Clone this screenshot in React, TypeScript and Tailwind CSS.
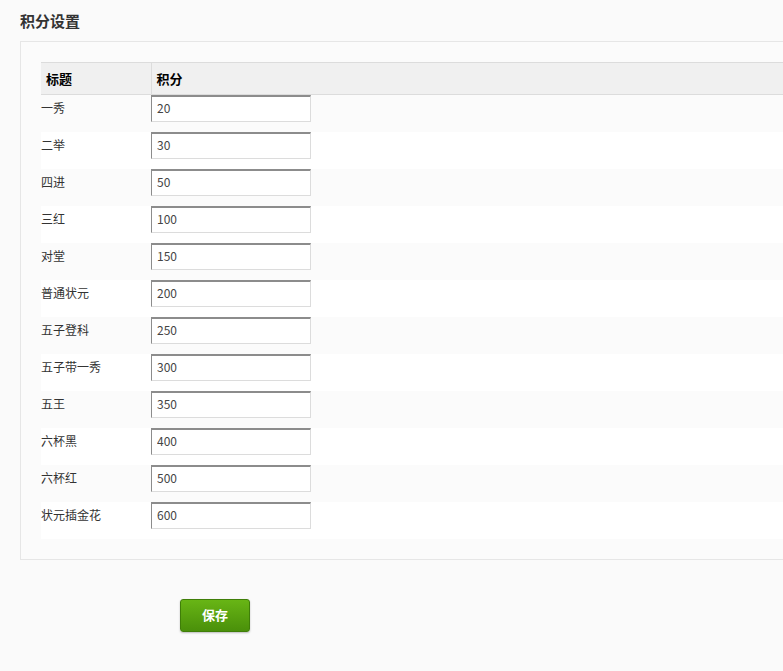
const rows: [string, string][] = [
  ["一秀", "20"],
  ["二举", "30"],
  ["四进", "50"],
  ["三红", "100"],
  ["对堂", "150"],
  ["普通状元", "200"],
  ["五子登科", "250"],
  ["五子带一秀", "300"],
  ["五王", "350"],
  ["六杯黑", "400"],
  ["六杯红", "500"],
  ["状元插金花", "600"],
];

const font = {
  fontFamily: '"Microsoft YaHei", "Noto Sans CJK SC", "Liberation Sans", sans-serif',
};

export default function App() {
  return (
    <div
      className="min-h-[671px] w-[783px] overflow-hidden bg-[#fafafa] text-[#333]"
      style={font}
    >
      {/* page title */}
      <div className="pl-5 pt-[11px] h-[41px]">
        <h1 className="text-[15px] font-bold leading-[20px] text-[#333]">积分设置</h1>
      </div>

      {/* settings panel */}
      <div className="ml-5 border border-r-0 border-[#e6e6e6] bg-[#fbfbfb] pl-5 pt-5 pb-5 w-[800px]">
        <table className="w-full border-collapse text-[12px]">
          <thead>
            <tr className="bg-[#f0f0f0] h-[32px]">
              <th className="w-[110px] border-t border-b border-[#dcdcdc] pl-[5px] text-left text-[13px] font-bold text-black">
                标题
              </th>
              <th className="border-t border-b border-l border-[#dcdcdc] pl-[5px] text-left text-[13px] font-bold text-black">
                积分
              </th>
            </tr>
          </thead>
          <tbody>
            {rows.map(([label, value], i) => (
              <tr key={label} className={i % 2 === 1 ? "bg-white" : ""}>
                <td className="h-[37px] align-top pt-[5px] text-[#333] leading-[16px]">
                  {label}
                </td>
                <td className="h-[37px] align-top">
                  <input
                    defaultValue={value}
                    className="block h-[27px] w-[160px] border border-t-2 border-l border-t-[#8c8c8c] border-l-[#8c8c8c] border-r-[#dcdcdc] border-b-[#dcdcdc] bg-white pl-[5px] pb-[3px] text-[12px] text-[#444] outline-none"
                    style={font}
                  />
                </td>
              </tr>
            ))}
          </tbody>
        </table>
      </div>

      {/* actions */}
      <div className="pl-[180px] pt-[39px]">
        <button className="h-[33px] w-[70px] rounded-[3px] border border-[#3f7e08] bg-gradient-to-b from-[#68b515] to-[#4a900a] text-[13px] font-bold text-white shadow-[0_1px_2px_rgba(0,0,0,0.25)]">
          保存
        </button>
      </div>
    </div>
  );
}
